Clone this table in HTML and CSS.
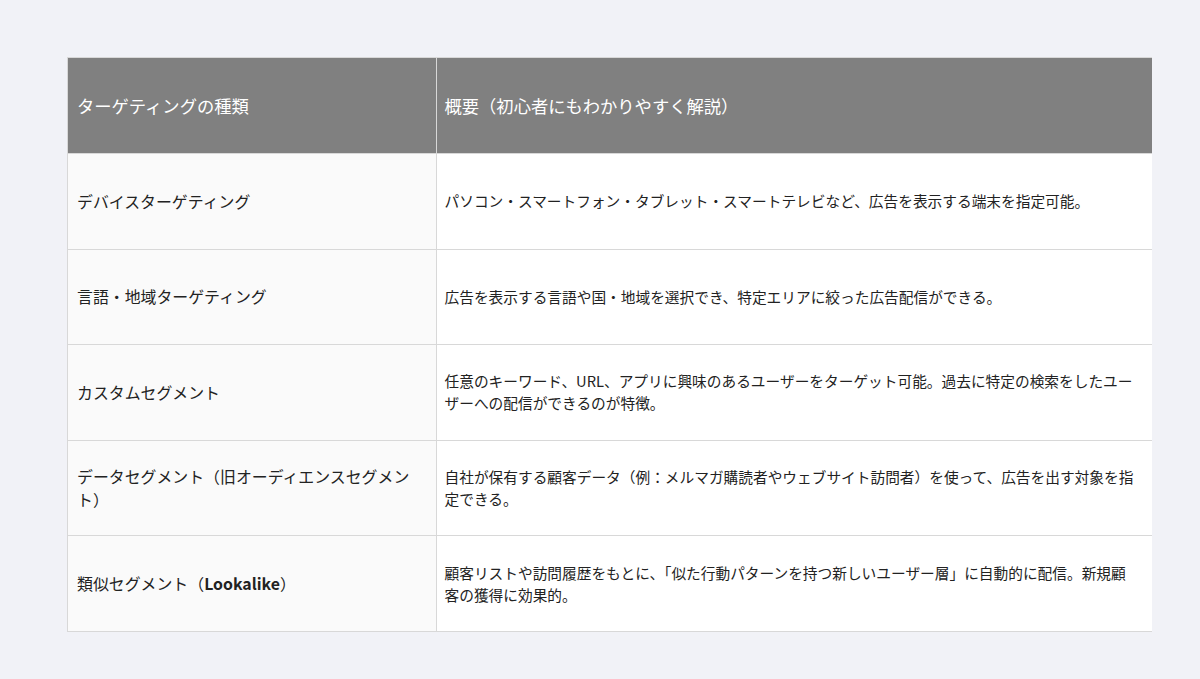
FILE: index.html
```html
<!DOCTYPE html>
<html lang="ja">
<head>
<meta charset="utf-8">
<link rel="stylesheet" href="styles.css">
</head>
<body>
<div class="page">
  <div class="table-wrap">
    <table class="tbl">
      <thead>
        <tr>
          <th class="c1">ターゲティングの種類</th>
          <th class="c2">概要（初心者にもわかりやすく解説）</th>
        </tr>
      </thead>
      <tbody>
        <tr>
          <td class="c1">デバイスターゲティング</td>
          <td class="c2">パソコン・スマートフォン・タブレット・スマートテレビなど、広告を表示する端末を指定可能。</td>
        </tr>
        <tr>
          <td class="c1">言語・地域ターゲティング</td>
          <td class="c2">広告を表示する言語や国・地域を選択でき、特定エリアに絞った広告配信ができる。</td>
        </tr>
        <tr>
          <td class="c1">カスタムセグメント</td>
          <td class="c2">任意のキーワード、URL、アプリに興味のあるユーザーをターゲット可能。過去に特定の検索をしたユーザーへの配信ができるのが特徴。</td>
        </tr>
        <tr>
          <td class="c1">データセグメント（旧オーディエンスセグメント）</td>
          <td class="c2">自社が保有する顧客データ（例：メルマガ購読者やウェブサイト訪問者）を使って、広告を出す対象を指定できる。</td>
        </tr>
        <tr>
          <td class="c1">類似セグメント（<b>Lookalike</b>）</td>
          <td class="c2">顧客リストや訪問履歴をもとに、「似た行動パターンを持つ新しいユーザー層」に自動的に配信。新規顧客の獲得に効果的。</td>
        </tr>
      </tbody>
    </table>
  </div>
</div>
</body>
</html>
```

FILE: styles.css
```css
html, body {
  margin: 0;
  padding: 0;
  background: #f1f2f7;
}
body {
  font-family: "Noto Sans CJK JP", "Noto Sans", sans-serif;
  color: #222;
}
.page {
  padding: 57px 0 0 67px;
}
.table-wrap {
  width: 1084px;
  overflow: hidden;
  border-top: 1px solid #d8d8d8;
  border-left: 1px solid #d8d8d8;
  border-bottom: 1px solid #d8d8d8;
}
.tbl {
  border-collapse: collapse;
  width: 1090px;
  table-layout: fixed;
}
.tbl th, .tbl td {
  border: 1px solid #d8d8d8;
  text-align: left;
  vertical-align: middle;
  height: 95.5px;
  padding: 0 10px 0 9px;
  box-sizing: border-box;
}
.tbl tr:first-child th { border-top: none; }
.tbl tbody tr:last-child td { border-bottom: none; }
.tbl .c1 { width: 368px; border-left: none; }
.tbl th {
  background: #808080;
  color: #fff;
  font-weight: 400;
  font-size: 17.3px;
}
.tbl th.c2 { padding-left: 8px; }
.tbl td.c1 {
  background: #fafafa;
  font-size: 15.9px;
  line-height: 23px;
  padding-right: 19px;
}
.tbl td.c2 {
  background: #fff;
  font-size: 14.7px;
  line-height: 22px;
  padding-left: 8px;
  padding-right: 18px;
}
.tbl td b { font-weight: 700; }
```
